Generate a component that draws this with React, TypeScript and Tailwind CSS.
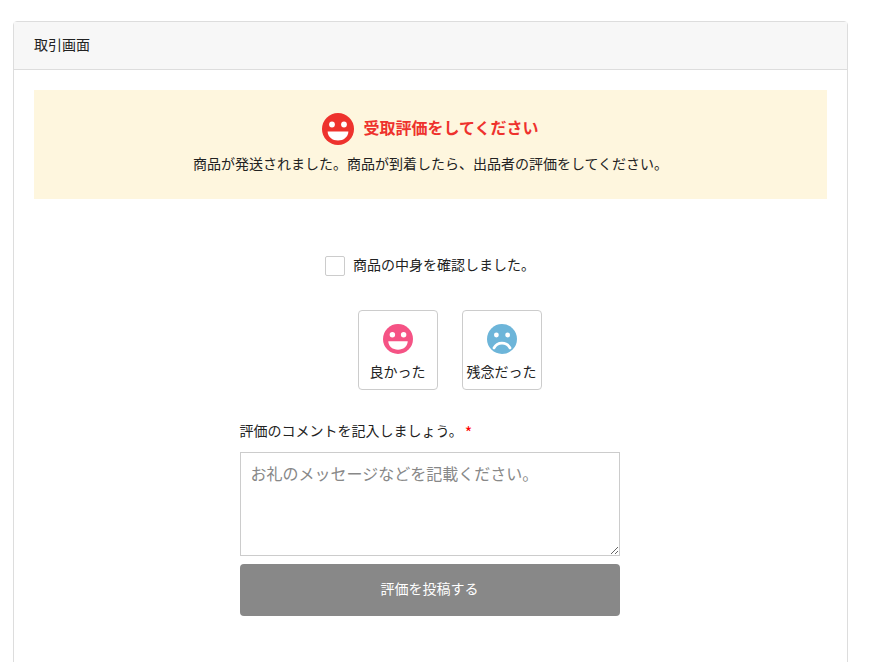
const jp = "font-['Meiryo','Noto_Sans_CJK_JP','Noto_Sans_JP',sans-serif]";

const HappyFace = ({ size, color }: { size: number; color: string }) => (
  <svg width={size} height={size} viewBox="0 0 32 32">
    <circle cx="16" cy="16" r="16" fill={color} />
    <circle cx="10" cy="11.5" r="2.9" fill="#fff" />
    <circle cx="22" cy="11.5" r="2.9" fill="#fff" />
    <path d="M5.6 18.4 H26.4 C26.2 24 21.6 27.4 16 27.4 C10.4 27.4 5.8 24 5.6 18.4 Z" fill="#fff" />
  </svg>
);

const SadFace = ({ size, color }: { size: number; color: string }) => (
  <svg width={size} height={size} viewBox="0 0 32 32">
    <circle cx="16" cy="16" r="16" fill={color} />
    <circle cx="10" cy="11.7" r="2.6" fill="#fff" />
    <circle cx="22" cy="11.7" r="2.6" fill="#fff" />
    <path d="M7.5 25.5 C9.5 21.5 12.5 20.4 16 20.4 C19.5 20.4 22.5 21.5 24.5 25.5" fill="none" stroke="#fff" strokeWidth="3" strokeLinecap="round" />
  </svg>
);

const RateButton = ({ label, children }: { label: string; children: React.ReactNode }) => (
  <div className="flex h-20 w-20 flex-col items-center rounded border border-[#ccc] pt-[13px]">
    {children}
    <div className="mt-[7px] whitespace-nowrap text-sm leading-5 text-[#222]">{label}</div>
  </div>
);

export default function App() {
  return (
    <div className={`h-[662px] overflow-hidden bg-white pl-[13px] pt-[21px] text-sm text-[#222] ${jp}`}>
      <div className="h-[700px] w-[835px] rounded border border-[#ddd]">
        <div className="flex h-[48px] items-center border-b border-[#ddd] bg-[#f7f7f7] px-5">
          <span className="-translate-y-0.5">取引画面</span>
        </div>
        <div className="px-5 pt-5">
          <div className="flex h-[109px] flex-col items-center bg-[#fef6de] pt-[23px]">
            <div className="flex items-center gap-[9px]">
              <HappyFace size={32} color="#ee322d" />
              <span className="-translate-y-0.5 text-base font-bold leading-8 text-[#ee322d]">受取評価をしてください</span>
            </div>
            <p className="mt-2 leading-5">商品が発送されました。商品が到着したら、出品者の評価をしてください。</p>
          </div>
          <div className="mt-[57px] flex items-center justify-center gap-2 pr-px">
            <span className="h-5 w-5 rounded-[2px] border border-[#ccc]" />
            <span className="-translate-y-0.5 leading-5">商品の中身を確認しました。</span>
          </div>
          <div className="mx-auto mt-[34px] w-[380px] -translate-x-px">
            <div className="flex justify-center gap-6 pl-10">
              <RateButton label="良かった">
                <HappyFace size={30} color="#f55385" />
              </RateButton>
              <RateButton label="残念だった">
                <SadFace size={30} color="#6db5d9" />
              </RateButton>
            </div>
            <div className="mt-[30px] h-5 leading-5">
              評価のコメントを記入しましょう。
              <span className="ml-0.5 inline-block translate-y-[3px] text-base leading-none text-[#f00]">*</span>
            </div>
            <textarea
              className="mt-3 block h-[104px] w-full rounded-none border border-[#ccc] px-[10px] pb-[6px] pt-2 text-base outline-none placeholder:text-[#888]"
              placeholder="お礼のメッセージなどを記載ください。"
            />
            <button className="mt-2 h-[52px] w-full rounded bg-[#888] pb-1 text-sm text-white">評価を投稿する</button>
          </div>
        </div>
      </div>
    </div>
  );
}
